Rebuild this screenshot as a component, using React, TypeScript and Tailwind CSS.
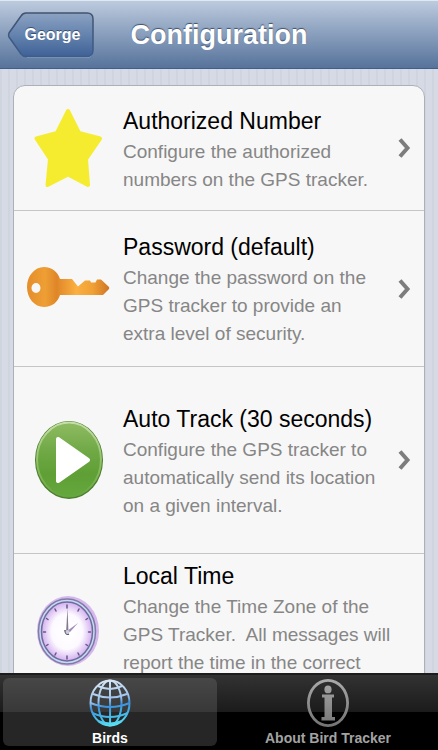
import React from 'react';
import { clsx } from 'clsx';

const StarIcon = () => (
  <svg width="70" height="80" viewBox="0 0 70 80" aria-hidden="true">
    <path
      d="M34 3 L45 25 L66 30.500 L52 51 L54 77 L34 66.500 L13.500 77 L16 51 L2.500 30.500 L23 25 Z"
      fill="#f5ec30"
      stroke="#f5ec30"
      strokeWidth="4"
      strokeLinejoin="round"
    />
  </svg>
);

const KeyIcon = () => (
  <svg width="83" height="44" viewBox="0 0 83 44" aria-hidden="true">
    <defs>
      <linearGradient id="key" x1="0" y1="0" x2="1" y2="0">
        <stop offset="0" stopColor="#e58d2c" />
        <stop offset="0.22" stopColor="#ee9f34" />
        <stop offset="0.36" stopColor="#df8628" />
        <stop offset="0.6" stopColor="#fbb040" />
        <stop offset="0.8" stopColor="#f0a035" />
        <stop offset="1" stopColor="#cf7423" />
      </linearGradient>
    </defs>
    <path
      fill="url(#key)"
      fillRule="evenodd"
      d="M17 0 C25 0 31 5 33 12 H45 L51 19.500 L58 13.500 H63 L64 15.500 H68.500 L70 12.500 H74 L82 20 Q82.500 21 82 22 L76 28 H33 C31 35 25 40 17 40 C7.500 40 0 31 0 20 S7.500 0 17 0 Z M9 16 A4.500 5 0 1 0 9 26 A4.500 5 0 1 0 9 16 Z"
    />
  </svg>
);

const PlayIcon = () => (
  <svg width="70" height="80" viewBox="0 0 70 80" aria-hidden="true">
    <defs>
      <linearGradient id="play" x1="0" y1="0" x2="0" y2="1">
        <stop offset="0" stopColor="#8fbb62" />
        <stop offset="0.4" stopColor="#6fa845" />
        <stop offset="0.7" stopColor="#5f9f35" />
        <stop offset="1" stopColor="#64a83c" />
      </linearGradient>
      <linearGradient id="play-rim" x1="0" y1="0" x2="0" y2="1">
        <stop offset="0" stopColor="#c5dfa8" />
        <stop offset="0.6" stopColor="#8abb62" />
        <stop offset="1" stopColor="#67a541" />
      </linearGradient>
    </defs>
    <ellipse cx="35" cy="40" rx="34" ry="39" fill="#4b7f2b" />
    <ellipse cx="35" cy="39.500" rx="32" ry="37" fill="url(#play)" stroke="url(#play-rim)" strokeWidth="2" />
    <path d="M24 19 L54 40 L24 61 Z" fill="#fff" stroke="#fff" strokeWidth="4" strokeLinejoin="round" />
  </svg>
);

const ClockIcon = () => (
  <svg width="64" height="72" viewBox="0 0 64 72" aria-hidden="true">
    <defs>
      <radialGradient id="face">
        <stop offset="0" stopColor="#fff" />
        <stop offset="0.6" stopColor="#fdfaff" />
        <stop offset="1" stopColor="#d3b0f0" />
      </radialGradient>
    </defs>
    <ellipse cx="31" cy="35" rx="31" ry="35" fill="#d5b8ed" />
    <ellipse cx="30" cy="35.500" rx="28.500" ry="32.500" fill="#c3daf2" stroke="#8379a8" strokeWidth="1.500" />
    <ellipse cx="30" cy="35.500" rx="25.500" ry="29.500" fill="url(#face)" stroke="#6e6c9a" strokeWidth="1.500" />
    <path
      d="M30 9v3M30 60v3M6.500 36h2M51.500 36h2M18 13l1 2M41 57l1 2M42 13l-1 2M19 57l-1 2M9.500 22.500l1.500 1M49 48.500l1.500 1M50.500 22.500l-1.500 1M11 48.500l-1.500 1"
      stroke="#68558a"
      strokeWidth="1.500"
      strokeLinecap="round"
    />
    <path d="M29 37 L30.500 12 L31.500 37 Z" fill="#85788f" />
    <path d="M30 35 L41 27 L33 36 Z" fill="#a28bb5" />
    <path d="M28 34 Q28 39 32 38" fill="none" stroke="#5b5268" strokeWidth="1.500" />
    <circle cx="30.500" cy="36" r="2" fill="#c9cede" />
  </svg>
);

const GlobeIcon = () => (
  <svg width="42" height="48" viewBox="0 0 42 48" className="shrink-0" aria-hidden="true">
    <defs>
      <linearGradient id="globe" gradientUnits="userSpaceOnUse" x1="15" y1="0" x2="23" y2="48">
        <stop offset="0" stopColor="#dbe9f7" />
        <stop offset="0.42" stopColor="#9fc5ee" />
        <stop offset="0.56" stopColor="#3c91dc" />
        <stop offset="0.8" stopColor="#46bde9" />
        <stop offset="1" stopColor="#5fe6f7" />
      </linearGradient>
    </defs>
    <g fill="none" stroke="url(#globe)" strokeWidth="2">
      <ellipse cx="21" cy="24" rx="19.500" ry="22.500" />
      <ellipse cx="21" cy="24" rx="11.500" ry="22.500" />
      <path d="M21 1 L21.100 47" />
      <path d="M9 7 Q21 13 33 7M4 15 Q21 22 38 15M1.500 24 Q21 32 40.500 24M3.500 34 Q21 42 38.500 34M9 42 Q21 47 33 42" />
    </g>
  </svg>
);

const InfoIcon = () => (
  <svg width="42" height="48" viewBox="0 0 42 48" className="shrink-0" aria-hidden="true">
    <defs>
      <linearGradient id="info" x1="0" y1="0" x2="0" y2="1">
        <stop offset="0" stopColor="#aaa" />
        <stop offset="1" stopColor="#737373" />
      </linearGradient>
    </defs>
    <path
      fill="url(#info)"
      fillRule="evenodd"
      d="M21 0 A21 24 0 0 1 21 48 A21 24 0 0 1 21 0 Z M21 2.800 A18.200 21.200 0 0 0 21 45.200 A18.200 21.200 0 0 0 21 2.800 Z M21 6.500 A3.600 3.900 0 0 1 21 14.300 A3.600 3.900 0 0 1 21 6.500 Z M15 15.500 H27 V18.500 H25 V38 H28 V41.500 H14.500 V38 H17.500 V18.500 H15 Z"
    />
  </svg>
);

const Chevron = () => (
  <svg width="14" height="22" viewBox="0 0 14 22" className="shrink-0" aria-hidden="true">
    <path d="M2 2.500 L9.500 11 L2 19.500" fill="none" stroke="#7d7d7d" strokeWidth="4" />
  </svg>
);

type SettingRowProps = {
  icon: React.ElementType;
  title: string;
  description: string;
  chevron?: boolean;
  className?: string;
};

const SettingRow = ({ icon: Icon, title, description, chevron = true, className }: SettingRowProps) => (
  <li className="border-b border-[#c6c6c6] last:border-b-0">
    <button className={clsx('flex w-full items-center pr-3 text-left', className)}>
      <span className="flex w-[109px] shrink-0 justify-center">
        <Icon />
      </span>
      <span className="mr-4 flex-1 pt-0.5">
        <span className="block text-[23px] leading-8 text-black">{title}</span>
        <span className="block pt-px text-[19px] leading-7 text-[#868686]">{description}</span>
      </span>
      {chevron && <Chevron />}
    </button>
  </li>
);

type TabProps = {
  icon: React.ElementType;
  label: string;
  active?: boolean;
};

const Tab = ({ icon: Icon, label, active = false }: TabProps) => (
  <button
    className={clsx(
      'flex flex-1 flex-col items-center rounded-md pt-px text-sm font-bold',
      active
        ? 'bg-[linear-gradient(#474747_0,#383838_34px,#262626_34px,#262626_100%)] text-white'
        : 'text-[#a3a3a3]'
    )}
  >
    <Icon />
    <span className="leading-[22px] whitespace-nowrap">{label}</span>
  </button>
);

export default function App() {
  return (
    <div className="flex h-screen flex-col overflow-hidden bg-[#d5d9e3] font-['Liberation_Sans',Arial,sans-serif]">
      {/* Navigation bar */}
      <header className="grid h-[69px] shrink-0 grid-cols-[1fr_auto_1fr] items-center border-t border-b border-t-[#dfe8f3] border-b-[#415d89] bg-linear-to-b from-[#bdcbde] to-[#57739b] px-[7px]">
        <button className="relative h-[46px] w-[87px] pl-1 text-base font-bold text-white [text-shadow:0_-1px_0_#39506f]">
          <svg className="absolute inset-0" width="87" height="46" viewBox="0 0 87 46" aria-hidden="true">
            <defs>
              <linearGradient id="back" x1="0" y1="0" x2="0" y2="1">
                <stop offset="0" stopColor="#8ca2c2" />
                <stop offset="0.5" stopColor="#6483ae" />
                <stop offset="1" stopColor="#3f6196" />
              </linearGradient>
              <linearGradient id="back-edge" x1="0" y1="0" x2="0" y2="1">
                <stop offset="0" stopColor="#42536f" />
                <stop offset="1" stopColor="#3d5c8b" />
              </linearGradient>
            </defs>
            <path d="M20 45.500 H80 Q85 45.500 86 40" fill="none" stroke="#8ba2c2" />
            <path
              d="M19 1 H80 Q86 1 86 7 V38 Q86 44.500 80 44.500 H19 Q16 44.500 14 42 L2 25 Q1 23 2 21 L14 4 Q16 1 19 1 Z"
              fill="url(#back)"
              stroke="url(#back-edge)"
              strokeWidth="1.500"
            />
          </svg>
          <span className="relative">George</span>
        </button>
        <h1 className="text-[27px] leading-8 font-bold text-white [text-shadow:0_-1px_1px_#3f4f68]">Configuration</h1>
      </header>

      {/* Settings list */}
      <main className="min-h-0 flex-1 overflow-hidden bg-[repeating-linear-gradient(90deg,#cfd4df_0,#cfd4df_2px,#d5dae4_2px,#d5dae4_8px)] px-[13px] pt-4">
        <ul className="rounded-xl border border-[#adb0b7] bg-[#f7f7f7]">
          <SettingRow
            icon={StarIcon}
            title="Authorized Number"
            description="Configure the authorized numbers on the GPS tracker."
            className="min-h-[124px]"
          />
          <SettingRow
            icon={KeyIcon}
            title="Password (default)"
            description="Change the password on the GPS tracker to provide an extra level of security."
            className="min-h-[155px]"
          />
          <SettingRow
            icon={PlayIcon}
            title="Auto Track (30 seconds)"
            description="Configure the GPS tracker to automatically send its location on a given interval."
            className="min-h-[186px]"
          />
          <SettingRow
            icon={ClockIcon}
            title="Local Time"
            description={'Change the Time Zone of the GPS Tracker.\u00a0 All messages will report the time in the correct'}
            chevron={false}
            className="min-h-[155px] *:last:pb-7"
          />
        </ul>
      </main>

      {/* Tab bar */}
      <nav className="flex h-[77px] shrink-0 gap-1 border-t-2 border-[#1c1c1c] bg-[linear-gradient(#323232_0,#1b1b1b_37px,#000_37px,#000_100%)] px-[3px] pt-[3px] pb-1">
        <Tab icon={GlobeIcon} label="Birds" active />
        <Tab icon={InfoIcon} label="About Bird Tracker" />
      </nav>
    </div>
  );
}
